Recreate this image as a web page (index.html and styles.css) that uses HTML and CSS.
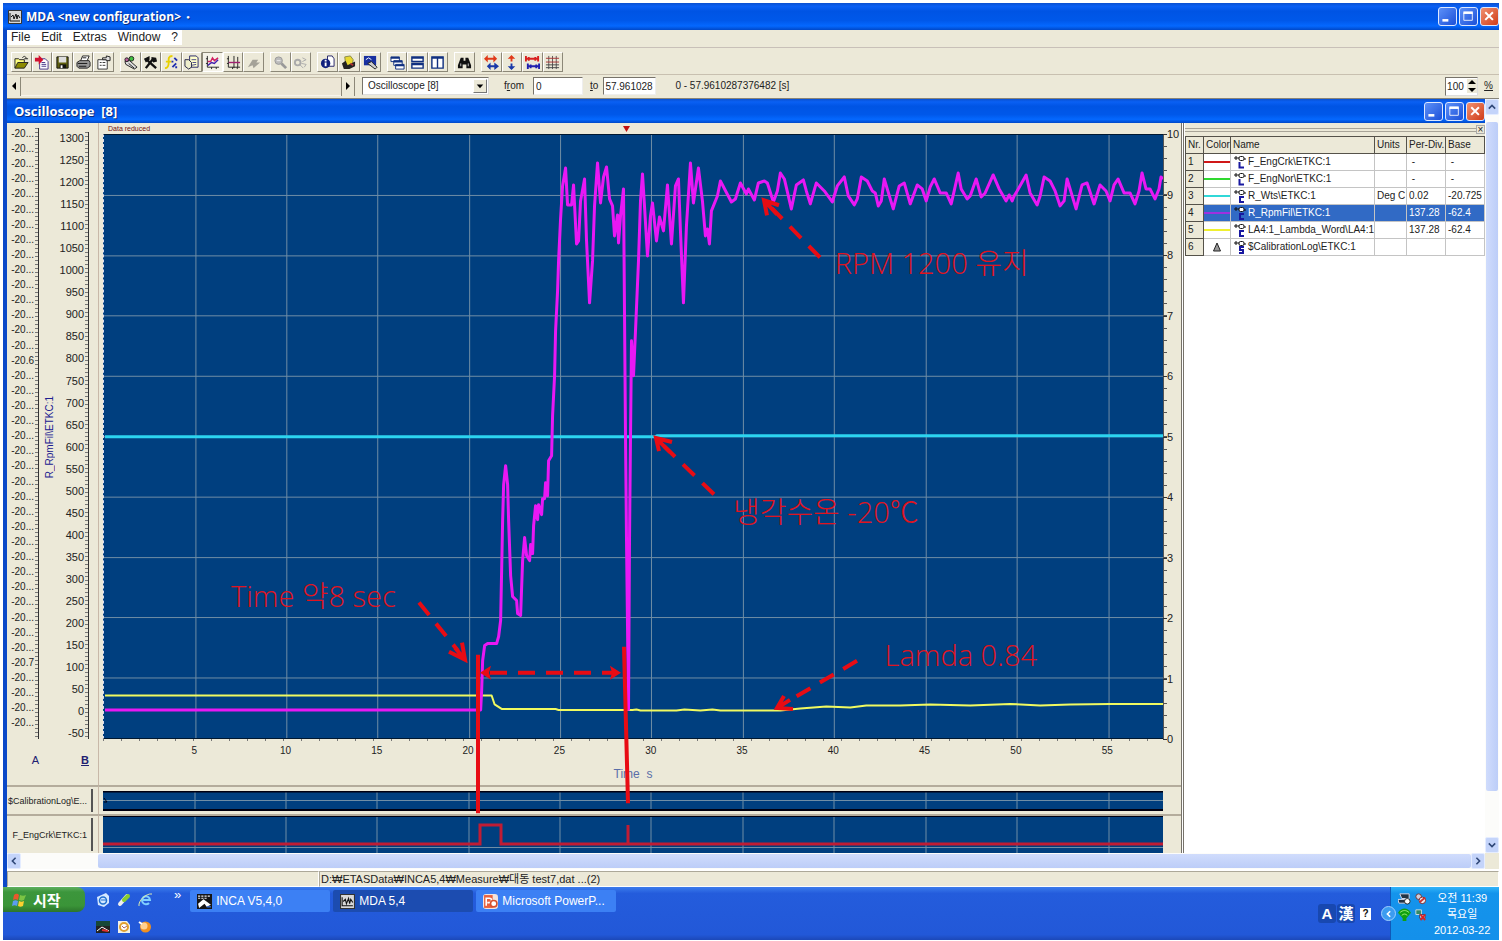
FILE: index.html
```html
<!DOCTYPE html>
<html lang="ko">
<head>
<meta charset="utf-8">
<title>MDA &lt;new configuration&gt;</title>
<link rel="stylesheet" href="styles.css">
</head>
<body>
<svg class="defs" aria-hidden="true">
  <symbol id="wave" viewBox="0 0 14 14"><path fill="#d8d8d8" stroke="#333" d="M.5.5h13v13H.5z"/><path d="M2 3v8h10M3 7l2-2 1 4 2-5 1 5 1-4 2 3" fill="none" stroke="#111"/></symbol>
  <symbol id="min" viewBox="0 0 20 20"><path fill="#fff" d="M4 13h7v3H4z"/></symbol>
  <symbol id="max" viewBox="0 0 20 20"><path fill="none" stroke="#fff" d="M4.500 5.500h10v9h-10z"/><path fill="#fff" d="M4 4h11v3H4z"/></symbol>
  <symbol id="cls" viewBox="0 0 20 20"><path stroke="#fff" stroke-width="2.400" d="M5 5l9 9M14 5l-9 9"/></symbol>
  <symbol id="sig" viewBox="0 0 14 14"><path d="M1 3h4M3 1v4M5 3h1M11 4h2" stroke="#111" fill="none"/><rect x="6" y="1.500" width="5" height="4" rx="1.500" fill="#fff" stroke="#111"/></symbol>
</svg>
<div class="desktop">
<main class="app">
  <header class="titlebar">
    <svg class="i14"><use href="#wave"/></svg>
    <h1>MDA &lt;new configuration&gt; <small>●</small></h1>
    <div class="winbtns">
      <button aria-label="Minimize"><svg><use href="#min"/></svg></button><button aria-label="Maximize"><svg><use href="#max"/></svg></button><button class="close" aria-label="Close"><svg><use href="#cls"/></svg></button>
    </div>
  </header>
  <nav class="menu"><div><button>File</button><button>Edit</button><button>Extras</button><button>Window</button><button>?</button></div></nav>
  <div class="toolbar">
    <div class="grp g5">
      <button aria-label="Open"><svg viewBox="0 0 16 16"><path d="M1 14V4h4l1 1h5v3" fill="#ffff80" stroke="#222"/><path d="M1 14l3-6h11l-4 6z" fill="#8c8a00" stroke="#222"/><path d="M9 3c2-3 4-1 4 1m-2 0h4" stroke="#222" fill="none"/></svg></button>
      <button aria-label="Import"><svg viewBox="0 0 16 16"><path d="M6 4h6l3 3v8H6z" fill="#fff" stroke="#438"/><path d="M8 8h4M8 10h5M8 12h5" stroke="#438"/><path d="M1 3h4V0l5 5-5 5V7H1z" fill="#d01030"/></svg></button>
      <button aria-label="Save"><svg viewBox="0 0 16 16"><path d="M2 2h12v12H2z" fill="#606010" stroke="#111"/><path d="M4 2h8v6H4z" fill="#ddd"/><path d="M5 10h7v4H5z" fill="#111"/><path d="M6 11h2v3H6z" fill="#fff"/></svg></button>
      <button aria-label="Print"><svg viewBox="0 0 16 16"><path d="M5 6l2-5h7l-2 5" fill="#fff" stroke="#222"/><path d="M1 8l3-2h10l1 2v4l-3 2H3l-2-2z" fill="#999" stroke="#222"/><path d="M2 9h10M3 12h8M7 3h4" stroke="#111"/></svg></button>
      <button aria-label="Properties"><svg viewBox="0 0 16 16"><path d="M2 5h10v10H2z" fill="#fff" stroke="#333"/><path d="M4 8h2M7 8h3M4 11h2M7 11h3" stroke="#333"/><path d="M7 3h4V1l4 1v4h-4V5H7z" fill="#ddd" stroke="#222"/></svg></button>
    </div>
    <div class="grp g7">
      <button aria-label="Variables"><svg viewBox="0 0 16 16"><path d="M2 7l5-1 8 7-3 2-9-5z" fill="#ddd" stroke="#222"/><circle cx="4" cy="5" r="2" fill="#c060a0" stroke="#222"/><circle cx="9" cy="4" r="2.500" fill="#40c040" stroke="#222"/><path d="M6 9l6 5" stroke="#222"/></svg></button>
      <button aria-label="Tools"><svg viewBox="0 0 16 16"><path d="M3 14l7-9M5 6l9 8" stroke="#111" stroke-width="2.500"/><path d="M1 4l6-3v4L3 8zM9 2l5 1 1 4-4 1-2-3z" fill="#111"/></svg></button>
      <button aria-label="Calculate"><svg viewBox="0 0 16 16"><path d="M9 1C4 1 5 5 5 8s-1 6-4 6M2 7h6" fill="none" stroke="#e8d000" stroke-width="2"/><path d="M11 3l3 3M9 13l4-4M8 7h2M13 12v2" stroke="#2030b0" stroke-width="2"/></svg></button>
      <button aria-label="Copy"><svg viewBox="0 0 16 16"><path d="M6 1h7l2 2v10H6z" fill="#ffc" stroke="#226"/><path d="M1 5h4l3 3v5l-3 2-4-3z" fill="#eec" stroke="#224"/><path d="M8 5h5M9 8h4M8 11l5-1" stroke="#448"/></svg></button>
      <button class="on" aria-label="Oscilloscope"><svg viewBox="0 0 16 16"><path d="M2.500 1v12H15M1 4h2M1 9h2M7 13v2M12 13v2" stroke="#222" fill="none"/><path d="M3 7h3l2-4 2 3 4-3" stroke="#d02060" stroke-width="1.500" fill="none"/><path d="M3 11l4-3 3 1 4-4" stroke="#4020b0" stroke-width="1.500" fill="none"/></svg></button>
      <button aria-label="Cursor"><svg viewBox="0 0 16 16"><path d="M2.500 1v12H15M1 4h2M1 9h2M8.500 1v13M7 13v2M12 13v2M12.500 2v11" stroke="#222" fill="none"/><path d="M3 8h12" stroke="#a02070" stroke-width="1.500"/></svg></button>
      <button disabled aria-label="Eraser"><svg viewBox="0 0 16 16"><path d="M2 13l5-8h6l-2 3h4l-7 6-1-3z" fill="#a4a298"/></svg></button>
    </div>
    <div class="grp g2">
      <button disabled aria-label="Zoom"><svg viewBox="0 0 16 16"><circle cx="6" cy="6" r="4" fill="#bbb" stroke="#999"/><path d="M9 9l5 5" stroke="#999" stroke-width="3"/><path d="M4 6h4" stroke="#eee"/></svg></button>
      <button disabled aria-label="Unzoom"><svg viewBox="0 0 16 16"><circle cx="5" cy="8" r="3" fill="none" stroke="#aaa" stroke-width="2"/><path d="M7 10l4 4M10 3l4 2-4 2M9 9l5 1-2 3" stroke="#aaa" fill="none"/></svg></button>
    </div>
    <div class="grp g3">
      <button aria-label="Info"><svg viewBox="0 0 16 16"><path d="M8 1h5l2 3v8H8z" fill="#fff" stroke="#226"/><circle cx="6" cy="9" r="5" fill="#10207c"/><path d="M6 8v4M6 5v2" stroke="#fff" stroke-width="2"/></svg></button>
      <button aria-label="Data"><svg viewBox="0 0 16 16"><path d="M4 2l6-1 3 4-1 6H5z" fill="#e8d830" stroke="#884"/><path d="M1 9l4-3 2 5 8-4v5l-6 3H3z" fill="#222"/><path d="M10 9l3 2" stroke="#a33" stroke-width="2"/></svg></button>
      <button aria-label="View"><svg viewBox="0 0 16 16"><path d="M1 1h13v10H1z" fill="#1830a0"/><path d="M3 5l3-2 3 2" stroke="#fff" fill="none"/><path d="M5 9l4-2 6 6-2 2z" fill="#ccc" stroke="#222"/></svg></button>
    </div>
    <div class="grp g3b">
      <button aria-label="Cascade"><svg viewBox="0 0 16 16"><path d="M1 2h9v5H1zM4 6h9v5H4zM6 10h9v5H6z" fill="#fff" stroke="#103080"/><path d="M1 2h9v2H1zM4 6h9v2H4zM6 10h9v2H6z" fill="#103080"/></svg></button>
      <button aria-label="Tile rows"><svg viewBox="0 0 16 16"><path d="M2 2h12v5H2zM2 9h12v5H2z" fill="#fff" stroke="#103080" stroke-width="1.500"/><path d="M2 2h12v2H2zM2 9h12v2H2z" fill="#103080"/></svg></button>
      <button aria-label="Tile columns"><svg viewBox="0 0 16 16"><path d="M2 2h6v12H2zM8 2h6v12H8z" fill="#fff" stroke="#103080" stroke-width="1.500"/><path d="M2 2h12v2H2z" fill="#103080"/></svg></button>
    </div>
    <div class="grp g1"><button aria-label="Find"><svg viewBox="0 0 16 16"><path d="M4 3h3v3h2V3h3l3 8v3h-5v-4H6v4H1v-3z" fill="#111"/><path d="M4 9v3M12 9v3" stroke="#ccc"/></svg></button></div>
    <div class="grp g4">
      <button aria-label="Scale both"><svg viewBox="0 0 16 16"><path d="M0 4l4-4v3h6V0l4 4-4 4V5H4v3z" fill="#e03818"/><path d="M3 12l4-4v3h4V8l5 4-5 4v-3H7v3z" fill="#1838a8"/></svg></button>
      <button aria-label="Scale Y"><svg viewBox="0 0 16 16"><path d="M8 0l4 4H9v3H7V4H4z" fill="#e03818"/><path d="M8 16l4-4H9V9H7v3H4z" fill="#1838a8"/></svg></button>
      <button aria-label="Fit X"><svg viewBox="0 0 16 16"><path d="M1 1v6M14 1v6M2 4h11M4 2v4M11 2v4" stroke="#d82020" stroke-width="2"/><path d="M3 9v6M15 9v6M4 12h10M6 10v4M12 10v4" stroke="#2020b0" stroke-width="2"/></svg></button>
      <button aria-label="Grid"><svg viewBox="0 0 16 16"><path d="M4 1v14M8 1v14M12 1v14" stroke="#555"/><path d="M1 3.500h14M1 7.500h14" stroke="#a33"/><path d="M1 10.500h14M1 13.500h14" stroke="#444"/></svg></button>
    </div>
  </div>
  <form class="navrow">
    <button type="button" class="arrow" aria-label="Back"><svg viewBox="0 0 8 8"><path d="M6 0v8L2 4z"/></svg></button>
    <div class="track"></div>
    <button type="button" class="arrow fwd" aria-label="Forward"><svg viewBox="0 0 8 8"><path d="M2 0v8l4-4z"/></svg></button>
    <div class="combo"><select aria-label="Window"><option>Oscilloscope [8]</option></select><svg viewBox="0 0 13 13"><path d="M3 5h7l-3.500 4z"/></svg></div>
    <label for="from">f<u>r</u>om</label><input id="from" value="0">
    <label for="to"><u>t</u>o</label><input id="to" value="57.961028">
    <output>0 - 57.9610287376482 [s]</output>
    <div class="spin"><input id="pct" value="100"><svg viewBox="0 0 10 14"><path d="M1 5h8L5 1zM1 9h8l-4 4z"/></svg></div><label for="pct"><u>%</u></label>
  </form>

  <div class="mdi">
    <section class="child">
      <header class="titlebar sub">
        <h2>Oscilloscope&nbsp; [8]</h2>
        <div class="winbtns">
          <button aria-label="Minimize"><svg><use href="#min"/></svg></button><button aria-label="Maximize"><svg><use href="#max"/></svg></button><button class="close" aria-label="Close"><svg><use href="#cls"/></svg></button>
        </div>
      </header>
      <div class="panes">
        <div class="scope">
          <div class="axes">
            <div class="axis a"><div class="vals">
              <span>-20...</span><span>-20...</span><span>-20...</span><span>-20...</span><span>-20...</span><span>-20...</span><span>-20...</span><span>-20...</span><span>-20...</span><span>-20...</span><span>-20...</span><span>-20...</span><span>-20...</span><span>-20...</span><span>-20...</span><span>-20.6</span><span>-20...</span><span>-20...</span><span>-20...</span><span>-20...</span><span>-20...</span><span>-20...</span><span>-20...</span><span>-20...</span><span>-20...</span><span>-20...</span><span>-20...</span><span>-20...</span><span>-20...</span><span>-20...</span><span>-20...</span><span>-20...</span><span>-20...</span><span>-20...</span><span>-20...</span><span>-20.7</span><span>-20...</span><span>-20...</span><span>-20...</span><span>-20...</span>
            </div><b>A</b></div>
            <div class="vname"><span>R_RpmFil\ETKC:1</span></div>
            <div class="axis b"><div class="vals">
              <span>1300</span><span>1250</span><span>1200</span><span>1150</span><span>1100</span><span>1050</span><span>1000</span><span>950</span><span>900</span><span>850</span><span>800</span><span>750</span><span>700</span><span>650</span><span>600</span><span>550</span><span>500</span><span>450</span><span>400</span><span>350</span><span>300</span><span>250</span><span>200</span><span>150</span><span>100</span><span>50</span><span>0</span><span>-50</span>
            </div><b><u>B</u></b></div>
          </div>
          <div class="main">
            <div class="strip"><small>Data reduced</small></div>
            <svg class="plot" viewBox="103 134 1060 604" preserveAspectRatio="none">
              <path class="grid" d="M195 134v604M286 134v604M377 134v604M469 134v604M560 134v604M651 134v604M743 134v604M834 134v604M926 134v604M1017 134v604M1109 134v604M103 194.500h1060M103 255h1060M103 315h1060M103 375.500h1060M103 436h1060M103 496.500h1060M103 557h1060M103 617h1060M103 677.500h1060"/>
              <path class="cy" d="M104 436H655L657 435H1163"/>
              <path class="ye" d="M104 695H491L494 704L501 708.500H555L558 709.500H632L636 709L640 710H676L684 709L700 710L712 709L720 710H780L800 708L826 706L850 707L866 705H900L930 704L970 705L1010 703.500L1040 705L1070 704L1110 703.500H1163"/>
              <path class="pu" d="M104 709.500H480L481 690L482 660L484 645L487 643H496L498 636L500 620L502 520L503 484L505 465L507 484L508 520L510 575L512 596L516 600L517 613L520 615L522 560L524 537L526 555L529 560L530 544L532 553L533 525L535 505L537 519L538 504L541 514L542 498L544 498L545 482L547 495L548 460L551 455L552 415L554 375L555 330L557 290L558 260L560 218L562 185L565 167L567 204L571 204L573 184L576 243L578 240L580 200L584 178L586 240L589 302L592 260L594 205L597 162L600 202L603 176L606 166L609 198L612 205L614 235L617 214L618 242L620 215L623 188L625 436L626 540L628 709L629 540L630 436L631 340L633 375L635 330L638 260L640 200L642 173L644 205L647 255L650 215L652 202L656 240L659 216L663 230L667 184L671 243L675 185L678 178L680 230L683 302L686 225L690 162L693 202L698 167L702 200L705 235L707 228L709 243L711 210L717 195L720 180L731 201L735 198L740 182L746 193L748 188L754 199L758 182L764 180L767 182L773 201L777 190L780 172L784 178L791 208L796 184L803 179L806 190L810 203L816 182L824 190L832 201L837 185L844 176L848 195L854 204L857 198L861 176L867 180L872 190L875 192L878 205L881 200L884 178L893 208L899 185L904 182L910 203L917 184L922 188L926 200L930 186L934 178L940 192L946 192L951 203L954 190L958 172L961 188L967 198L970 195L976 178L981 196L985 192L993 174L999 188L1006 200L1009 194L1012 200L1014 195L1017 190L1026 174L1030 192L1037 204L1040 195L1044 176L1050 180L1055 190L1060 205L1064 200L1067 178L1076 208L1082 184L1087 182L1094 203L1100 184L1106 190L1110 200L1114 184L1118 178L1124 192L1130 192L1135 203L1139 190L1142 172L1146 188L1150 188L1155 198L1159 188L1161 176L1163 178"/>
            </svg>
            <div class="yr"><span>10</span><span>9</span><span>8</span><span>7</span><span>6</span><span>5</span><span>4</span><span>3</span><span>2</span><span>1</span><span>0</span></div>
            <div class="xs"><span>5</span><span>10</span><span>15</span><span>20</span><span>25</span><span>30</span><span>35</span><span>40</span><span>45</span><span>50</span><span>55</span></div>
            <div class="xname">Time&nbsp; s</div>
          </div>
          <div class="lab cal"><span>$CalibrationLog\E...</span></div>
          <div class="bar cal"><svg viewBox="103 789 1060 20" preserveAspectRatio="none"><path class="grid" d="M195 789v20M286 789v20M377 789v20M469 789v20M560 789v20M651 789v20M743 789v20M834 789v20M926 789v20M1017 789v20M1109 789v20M103 798.500h1060"/><path d="M103 789.500h1060M103 808h1060" stroke="#001" stroke-width="2" fill="none"/><path d="M104 796l3 4h-3" stroke="#001" fill="none"/></svg></div>
          <div class="lab eng"><span>F_EngCrk\ETKC:1</span></div>
          <div class="bar eng"><svg viewBox="103 814 1060 37" preserveAspectRatio="none"><path class="grid" d="M195 814v37M286 814v37M377 814v37M469 814v37M560 814v37M651 814v37M743 814v37M834 814v37M926 814v37M1017 814v37M1109 814v37M103 845.500h1060"/><path d="M103 814.500h1060" stroke="#001"/><path d="M103 842H480V823H501V842H628V823V842H1163" stroke="#c01c34" stroke-width="3" fill="none"/></svg></div>
          <div class="notes">
            <svg viewBox="99 123 1082 728" preserveAspectRatio="none">
              <path d="M623 126h7l-3.500 6z" fill="#c01010"/>
              <g fill="none" stroke="#e80c14" stroke-width="4">
                <path d="M478 653V811M624 645L628 801"/>
                <path d="M490 671H612" stroke-dasharray="17 11"/>
                <path d="M419 601L458 649M820 257L772 208M714 493L664 445M857 659L787 700" stroke-dasharray="16 11"/>
              </g>
              <g fill="#e80c14">
                <path d="M480 671l11-7-2 7 2 7zM621 671l-11-7 2 7-2 7z"/>
              </g>
              <g fill="none" stroke="#e80c14" stroke-width="4">
                <path d="M449 650L465 658L462 641M465 658L455 646"/>
                <path d="M767 215L764 200L779 205M764 200L777 214"/>
                <path d="M659 450L656 437L672 441M656 437L670 451"/>
                <path d="M784 694L777 706L793 707M777 706L790 698"/>
              </g>
            </svg>
            <p class="n1">RPM 1200 유지</p><p class="n2">냉각수온 -20℃</p><p class="n3">Time 약8 sec</p><p class="n4">Lamda 0.84</p>
          </div>
        </div>
        <aside class="legend">
          <div class="grip"><i></i><button aria-label="Close list">×</button></div>
          <table>
            <colgroup><col class="c1"><col class="c2"><col><col class="c4"><col class="c5"><col class="c6"></colgroup>
            <thead><tr><th>Nr.</th><th>Color</th><th>Name</th><th>Units</th><th>Per-Div.</th><th>Base</th></tr></thead>
            <tbody>
              <tr><th>1</th><td><i class="red"></i></td><td><svg class="i14"><use href="#sig"/><path class="k" d="M6.500 7v5.500H11"/></svg>F_EngCrk\ETKC:1</td><td></td><td>&nbsp;-</td><td>&nbsp;-</td></tr>
              <tr><th>2</th><td><i class="green"></i></td><td><svg class="i14"><use href="#sig"/><path class="k" d="M6.500 7v5.500H11"/></svg>F_EngNor\ETKC:1</td><td></td><td>&nbsp;-</td><td>&nbsp;-</td></tr>
              <tr><th>3</th><td><i class="cyan"></i></td><td><svg class="i14"><use href="#sig"/><path class="k" d="M11 8H7v5h4"/></svg>R_Wts\ETKC:1</td><td>Deg C</td><td>0.02</td><td>-20.725</td></tr>
              <tr class="sel"><th>4</th><td><i class="violet"></i></td><td><svg class="i14"><use href="#sig"/><path class="k" d="M11 8H7v5h4"/></svg>R_RpmFil\ETKC:1</td><td></td><td>137.28</td><td>-62.4</td></tr>
              <tr><th>5</th><td><i class="yellow"></i></td><td><svg class="i14"><use href="#sig"/><path class="k" d="M11 8H7v5h4"/></svg>LA4:1_Lambda_Word\LA4:1</td><td></td><td>137.28</td><td>-62.4</td></tr>
              <tr><th>6</th><td class="tri"><svg viewBox="0 0 10 10"><path d="M5 1l3.500 8h-7z" fill="#999" stroke="#222"/></svg></td><td><svg class="i14"><use href="#sig"/><path class="k" d="M11 7H7v3h3v3H6"/></svg>$CalibrationLog\ETKC:1</td><td></td><td></td><td></td></tr>
            </tbody>
          </table>
        </aside>
      </div>
      <div class="hs"><button aria-label="Left"><svg viewBox="0 0 10 10"><path d="M7 1L3 5l4 4"/></svg></button><div class="ht"><i></i></div><button aria-label="Right"><svg viewBox="0 0 10 10"><path d="M3 1l4 4-4 4"/></svg></button></div>
    </section>
    <div class="vs"><button aria-label="Up"><svg viewBox="0 0 10 10"><path d="M1 7l4-4 4 4"/></svg></button><div class="vt"><i></i></div><button aria-label="Down"><svg viewBox="0 0 10 10"><path d="M1 3l4 4 4-4"/></svg></button></div>
  </div>
  <footer class="status"><span></span><span>D:₩ETASData₩INCA5,4₩Measure₩대동 test7,dat ...(2)</span></footer>
</main>
<div class="taskbar">
  <button class="start"><svg viewBox="0 0 18 18"><path d="M3 4c2-2 4-1 5 0L7 9C5 8 4 8 2 9z" fill="#e8582c"/><path d="M9 4c2 1 4 1 6 0l-2 5c-2 1-3 1-5 0z" fill="#7cc444"/><path d="M2 10c2-1 3-1 5 0l-1 5c-2-1-3-1-5 0z" fill="#5c9cf0"/><path d="M8 10c2 1 3 1 5 0l-1 5c-2 1-3 1-5 0z" fill="#fcd030"/></svg>시작</button>
  <div class="quick">
    <a href="#" aria-label="Outlook"><svg viewBox="0 0 14 14"><path d="M1 4l9-4 3 3v7l-5 4-6-2z" fill="#d4e8ff"/><circle cx="7" cy="7.500" r="3.500" fill="none" stroke="#2070d0" stroke-width="1.500"/><path d="M5 7h5" stroke="#2070d0"/></svg></a>
    <a href="#" aria-label="Notes"><svg viewBox="0 0 14 14"><path d="M3 11l7-8" stroke="#eee" stroke-width="4" stroke-linecap="round"/><path d="M7 7l4-4" stroke="#88cc30" stroke-width="4" stroke-linecap="round"/></svg></a>
    <a href="#" aria-label="Internet Explorer"><svg viewBox="0 0 14 14"><path d="M11 10a4 4 0 1 1 1-3H5" fill="none" stroke="#80d0ff" stroke-width="2"/><path d="M1 13C0 8 8 0 14 1" fill="none" stroke="#d8e8b0"/></svg></a>
    <a href="#" aria-label="INCA"><svg viewBox="0 0 14 14"><path d="M0 1h14v5H0z" fill="#184838"/><path d="M0 6h14v7H0z" fill="#222"/><path d="M1 11l5-4 7 4" stroke="#fff" fill="none"/><path d="M6 10l6 1" stroke="#e03030" stroke-width="2"/></svg></a>
    <a href="#" aria-label="Mail"><svg viewBox="0 0 14 14"><path d="M1 1h9l3 4v8H1z" fill="#f0f0e8"/><circle cx="7" cy="7" r="4" fill="#fff" stroke="#e0a030" stroke-width="2"/><path d="M5 6l2 2 3-2" stroke="#a66" fill="none"/></svg></a>
    <a href="#" aria-label="Player"><svg viewBox="0 0 14 14"><circle cx="7.500" cy="7" r="5.500" fill="#f09020"/><circle cx="6" cy="6" r="3.500" fill="#ffd090"/><path d="M1 2l3 2" stroke="#fff" stroke-width="2"/></svg></a>
  </div>
  <span class="more">»</span>
  <div class="tasks">
    <button><svg viewBox="0 0 14 14"><path fill="#151515" d="M0 0h14v14H0z"/><path d="M1 2h12M1 4h8" stroke="#eee" stroke-dasharray="2 1"/><path d="M1 9l5-4 7 5-4 2-2-3-5 4z" fill="#fff"/><path d="M9 12h4" stroke="#48f"/></svg>INCA V5,4,0</button>
    <button class="act"><svg class="i14"><use href="#wave"/></svg>MDA 5,4</button>
    <button><svg viewBox="0 0 14 14"><rect width="14" height="14" rx="3" fill="#f4e4dc"/><path d="M1 1h8v12H1z" fill="#e8603c"/><path d="M3 11V4h3a2 2 0 0 1 0 4H4" fill="none" stroke="#fff" stroke-width="1.500"/><circle cx="10" cy="9" r="3" fill="#fff" stroke="#d8502c" stroke-width="1.500"/></svg>Microsoft PowerP...</button>
  </div>
  <div class="ime"><button>A</button><button>漢</button><button class="q">?</button></div>
  <div class="tray">
    <button class="chev" aria-label="Hide icons"><svg viewBox="0 0 10 10"><path d="M6.500 1.500L3 5l3.500 3.500"/></svg></button>
    <div class="ticons">
      <svg viewBox="0 0 14 14"><path d="M2 2h10v5H4zM0 8h9v4H1z" fill="#234" stroke="#dde"/><circle cx="10" cy="10" r="3" fill="#fff" stroke="#222"/></svg>
      <svg viewBox="0 0 14 14"><circle cx="5" cy="5" r="3" fill="#ccd" stroke="#633"/><circle cx="9" cy="9" r="3.500" fill="#eee" stroke="#822"/><path d="M6 11l6-5" stroke="#c33" stroke-width="2"/></svg>
      <svg viewBox="0 0 14 14"><path d="M0 5c4-6 10-6 14 0l-5 6v3H5v-3z" fill="#10a010"/><path d="M2 5c3-3 7-3 10 0M4 8c2-2 4-2 6 0" stroke="#a0f080" fill="none"/></svg>
      <svg viewBox="0 0 14 14"><path d="M2 2h6v5H2z" fill="#386" stroke="#cdd"/><path d="M6 7h6v4H6z" fill="#ccd" stroke="#446"/><path d="M7 7l5 6M12 7l-5 6" stroke="#e02020" stroke-width="2"/></svg>
    </div>
    <time>오전 11:39<br>목요일<br>2012-03-22</time>
  </div>
</div>
</div>
</body>
</html>
```
FILE: styles.css
```css
* { box-sizing: border-box; }
body { margin: 0; background: #fff; font: 11px/12px "Liberation Sans", "Noto Sans CJK KR", sans-serif; color: #222; }
button, input, select { font: inherit; color: inherit; padding: 0; margin: 0; border: 0; border-radius: 0; background: none; }
h1, h2, p { margin: 0; font-weight: normal; }
svg { display: block; }
.defs { position: absolute; width: 0; height: 0; }
.i14 { width: 14px; height: 14px; flex: none; }
.desktop { min-height: 100vh; padding: 3px; display: flex; flex-direction: column; }
.app { flex: 1; display: flex; flex-direction: column; background: #ece9d8; border-left: 4px solid #0a48c8; min-height: 0; }

.titlebar { height: 27px; display: flex; align-items: center; gap: 4px; margin-left: -4px; padding: 0 0 0 5px; background: linear-gradient(#0a50d0, #0a60f4 12%, #0054e4 30%, #0058ea 65%, #0468ff 85%, #0048c8); color: #fff; }
.titlebar h1, .titlebar h2 { flex: 1; font: bold 12px/16px "Open Sans", sans-serif; text-shadow: 1px 1px #0a2c80; }
.titlebar h2 { font-size: 13px; }
.titlebar small { font-size: 6px; vertical-align: 2px; margin-left: 2px; }
.titlebar.sub { height: 24px; margin: 0; padding: 0 0 0 7px; }
.winbtns { display: flex; gap: 2px; }
.winbtns button { width: 19px; height: 19px; border: 1px solid #dde8ff; border-radius: 3px; background: linear-gradient(135deg, #5c90f8, #1c50d8); }
.winbtns .close { background: linear-gradient(135deg, #f09070, #d03c18); }
.winbtns svg { width: 17px; height: 17px; }

.menu { height: 18px; border-bottom: 1px solid #c8c0b8; font: 12px/15px "Liberation Sans", sans-serif; }
.menu div { width: 175px; height: 15px; padding: 0 4px; display: flex; justify-content: space-between; background: #fff; }
.toolbar { height: 27px; padding: 4px 4px 2px; display: flex; gap: 6px; border-bottom: 1px solid #c8c0b0; }
.grp { display: grid; grid-auto-flow: column; grid-auto-columns: 1fr; }
.g5 { width: 103px; }
.g7 { width: 144px; }
.g2 { width: 41px; }
.g3 { width: 64px; }
.g3b { width: 61px; }
.g1 { width: 21px; }
.g4 { width: 82px; }
.grp button { display: grid; place-items: center; border: 1px solid; border-color: #fff #8c8878 #8c8878 #fff; }
.grp button.on { border-color: #8c8878 #fff #fff #8c8878; background: #f4f2e8; }
.grp svg { width: 15px; height: 15px; }

.navrow { height: 24px; padding: 2px 6px 3px 0; display: flex; align-items: center; border-bottom: 1px solid #888478; }
.arrow { width: 14px; height: 19px; border-right: 1px solid #8c8878; }
.arrow svg { width: 8px; height: 8px; margin: 0 auto; }
.track { width: 320px; height: 19px; background: #ece6d6; border-top: 1px solid #c4bca8; border-bottom: 1px solid #f8f4ec; }
.fwd { border-left: 1px solid #8c8878; }
.combo { width: 127px; height: 18px; margin: 0 15px 0 7px; display: flex; align-items: center; background: #fff; border: 1px solid; border-color: #77736a #ddd #ddd #77736a; }
.combo select { flex: 1; min-width: 0; appearance: none; padding-left: 5px; font-size: 10px; }
.combo svg { width: 14px; height: 14px; margin-right: 1px; background: #ece9d8; border: 1px solid; border-color: #fff #777 #777 #fff; }
.navrow label { margin-right: 9px; font-size: 10px; }
.navrow label:last-child { margin: 0 0 0 6px; }
.navrow input { width: 50px; height: 18px; margin-right: 7px; padding: 0 2px; background: #fff; border: 1px solid; border-color: #77736a #eee #eee #77736a; font-size: 10px; }
.navrow #to { width: 53px; margin-right: 19px; padding: 0 1px; }
.navrow label[for="to"] { margin-right: 5px; }
.navrow output { flex: 1; font-size: 10px; }
.spin { display: flex; align-items: center; background: #fff; border: 1px solid; border-color: #77736a #ddd #ddd #77736a; }
.spin #pct { width: 21px; height: 17px; margin: 0; padding: 0 0 0 1px; border: 0; }
.spin svg { width: 10px; height: 14px; background: #ece9d8; }

.mdi { flex: 1; display: flex; min-height: 0; }
.child { flex: 1; min-width: 0; display: flex; flex-direction: column; }
.panes { flex: 1; display: flex; min-height: 0; }
.scope { flex: 1; min-width: 0; position: relative; display: grid; grid-template-columns: 92px 1fr; grid-template-rows: 1fr 29px 39px; }
.axes { display: flex; padding-top: 11px; border-right: 1px solid #c8b8a8; }
.axis { display: flex; flex-direction: column; padding-bottom: 19px; }
.axis b { padding-top: 15px; font-weight: normal; text-align: right; color: #202070; }
.axis.b b { font-weight: bold; }
.vals { flex: 1; display: flex; flex-direction: column; justify-content: space-between; text-align: right; position: relative; padding-right: 5px; font-size: 11px; line-height: 12px; }
.vals::after { content: ""; position: absolute; right: 0; top: 0; bottom: 0; width: 3px; border-right: 1px solid #333; background: repeating-linear-gradient(#777 0 1px, transparent 1px 4px); }
.vals span { white-space: nowrap; margin-left: -4px; }
.a { width: 32px; }
.a .vals { font-size: 10px; margin-top: -6px; padding-bottom: 10px; }
.vname { width: 22px; padding-bottom: 45px; display: grid; place-items: center; color: #202090; font-size: 10px; }
.vname span { writing-mode: vertical-rl; transform: rotate(180deg); }
.b { width: 28px; }
.b .vals { margin-top: -2px; }
.main { min-width: 0; display: grid; grid-template-columns: 1fr 18px; grid-template-rows: 11px 1fr 26px 20px; padding-left: 4px; }
.strip { grid-column: 1 / 3; padding-left: 5px; color: #701010; line-height: 11px; }
.strip small { font-size: 7px; display: block; }
.plot { width: 100%; height: 100%; min-height: 0; background: #003f7f; border-left: 1px dashed #dde; border-top: 1px solid #001830; border-bottom: 1px solid #001830; }
.grid { stroke: #6f8ea6; fill: none; }
.pu, .cy, .ye { fill: none; stroke-linejoin: round; stroke-width: 3; }
.pu { stroke: #e818f4; }
.cy { stroke: #2cd4f0; }
.ye { stroke: #f0fa60; stroke-width: 2; }
.yr { margin: -6px 0; display: flex; flex-direction: column; justify-content: space-between; position: relative; padding-left: 4px; }
.yr::before { content: ""; position: absolute; left: 0; top: 6px; bottom: 6px; width: 3px; border-left: 1px solid #555; background: repeating-linear-gradient(#555 0 1px, transparent 1px 2%); }
.yr span::before { content: ""; position: absolute; left: 0; width: 4px; height: 1px; margin-top: 6px; background: #333; }
.xs { display: flex; padding: 5px 0 0 4.300%; background: repeating-linear-gradient(90deg, #777 0 1px, transparent 1px 18px) top / 100% 2px no-repeat; font-size: 10px; grid-column: 1; }
.xs span { flex: none; width: 9%; text-align: center; line-height: 14px; }
.xname { grid-column: 1; text-align: center; color: #5a6ea8; font-size: 12px; line-height: 18px; }
.lab, .bar { border-top: 2px solid #b4ac9c; }
.lab { display: flex; align-items: center; justify-content: flex-end; padding: 2px 5px 2px 0; border-right: 1px solid #c8b8a8; font-size: 9px; white-space: nowrap; }
.lab span { align-self: stretch; display: flex; align-items: center; padding-right: 4px; border-right: 2px solid #555; }
.bar { padding: 0 18px 0 4px; }
.bar.cal { padding-top: 4px; padding-bottom: 3px; }
.bar svg { width: 100%; height: 100%; background: #003f7f; }
.notes { position: absolute; left: 92px; right: 0; top: 0; bottom: 0; pointer-events: none; }
.notes svg { width: 100%; height: 100%; }
.notes p { position: absolute; color: #e01420; font: 300 29px/32px "Open Sans", "Noto Sans CJK KR", sans-serif; white-space: nowrap; }
.n1 { left: 68%; top: 17%; }
.n2 { left: 58.600%; top: 51%; }
.n3 { left: 12.200%; top: 62.500%; }
.n4 { left: 72.600%; top: 70.700%; }

.legend { width: 304px; flex: none; padding-left: 1px; background: #fff; border-left: 3px double #77736a; }
.grip { height: 13px; display: flex; align-items: center; background: #ece9d8; }
.grip i { flex: 1; height: 4px; border: solid #a8a498; border-width: 1px 0; }
.grip button { width: 9px; height: 9px; border: 1px solid #aaa; line-height: 7px; font-size: 10px; }
table { width: 100%; table-layout: fixed; border-collapse: collapse; font-size: 10px; line-height: 12px; }
.c1 { width: 18px; }
.c2 { width: 27px; }
.c4 { width: 32px; }
.c5, .c6 { width: 39px; }
th, td { height: 17px; padding: 0 0 0 2px; text-align: left; font-weight: normal; border: 1px solid #c4c4c4; white-space: nowrap; overflow: hidden; }
th { background: #ece9d8; border-color: #55524a; }
td .i14 { display: inline-block; vertical-align: -4px; margin: 0 1px 0 0; }
td:nth-child(2) { padding: 0; }
td i { display: block; height: 2px; }
.k { fill: none; stroke: #1818a0; stroke-width: 2; }
.red { background: #d01818; }
.green { background: #30d830; }
.cyan { background: #30d8d8; }
.violet { background: #a030e0; }
.yellow { background: #f0f030; }
.sel td { background: #316ac5; color: #fff; }
.tri svg { width: 10px; height: 10px; margin: auto; }

.hs { height: 16px; display: flex; background: #fcfcfa; }
.hs button, .vs button { width: 14px; height: 16px; flex: none; background: #c4d4fa; border: 1px solid #e4ecff; border-radius: 2px; }
.hs button svg, .vs button svg { width: 8px; height: 8px; margin: auto; fill: none; stroke: #304878; stroke-width: 2; }
.ht { flex: 1; padding: 1px 0 1px 77px; }
.ht i { display: block; height: 100%; background: linear-gradient(#d0dcfc, #bccdf8); border-radius: 2px; }
.vs { width: 14px; display: flex; flex-direction: column; background: #fcfcfa; border-bottom: 16px solid #ece9d8; }
.vt { flex: 1; padding: 7px 1px 46px 1px; }
.vt i { display: block; height: 100%; background: linear-gradient(90deg, #d0dcfc, #bccdf8); border-radius: 2px; }
.status { height: 18px; display: flex; border-top: 2px solid #fff; }
.status span { border: 1px solid; border-color: #aca899 #fff #fff #aca899; width: 312px; font: 11px/14px "Liberation Sans", "Noto Sans CJK KR", sans-serif; }
.status span + span { flex: 1; padding-left: 1px; }

.taskbar { height: 53px; display: flex; background: linear-gradient(#3c7cec, #245cdc 12%, #2258d8 90%, #1c48b8); color: #fff; font: 12px/16px "Liberation Sans", "Noto Sans CJK KR", sans-serif; }
.start { width: 82px; height: 25px; display: flex; align-items: center; gap: 4px; padding-left: 8px; background: linear-gradient(#60b060, #3c963c 20%, #3a9438 75%, #2c742c); border-radius: 0 8px 8px 0; font: bold 15px/20px "Noto Sans CJK KR", sans-serif; }
.start svg { width: 18px; height: 18px; }
.quick { width: 63px; margin-left: 7px; padding-top: 6px; display: grid; grid-template-columns: repeat(3, 21px); grid-auto-rows: 27px; }
.quick a { justify-self: center; }
.quick svg { width: 14px; height: 14px; }
.more { margin: 0 9px 0 19px; font-size: 13px; }
.tasks { flex: 1; display: flex; gap: 3px; padding-top: 3px; }
.tasks button { width: 140px; height: 22px; display: flex; align-items: center; gap: 4px; padding-left: 7px; background: #3c80f4; border-radius: 2px; }
.tasks .act { background: #1c4cb0; }
.tasks svg { width: 15px; height: 15px; flex: none; }
.ime { display: flex; align-items: center; gap: 1px; margin-right: 19px; }
.ime button { width: 18px; height: 19px; background: #1848b0; border-radius: 3px; font: bold 15px/18px "Liberation Sans", "Noto Sans CJK KR", sans-serif; }
.ime .q { width: 11px; height: 12px; margin-left: 4px; background: #fff; color: #111; font-size: 10px; line-height: 11px; border-radius: 0; }
.tray { width: 109px; display: flex; align-items: center; background: linear-gradient(#30b4f8, #1494ec 12%, #1490ea); border-left: 1px solid #1058b8; }
.chev { width: 15px; height: 15px; margin-left: -10px; border-radius: 8px; background: #3c9cf0; border: 1px solid #a0d0ff; }
.chev svg { width: 8px; height: 8px; margin: auto; fill: none; stroke: #fff; stroke-width: 2; }
.ticons { display: grid; grid-template-columns: 14px 14px; gap: 3px 2px; margin: 0 6px 14px 2px; }
.ticons svg { width: 13px; height: 13px; }
.tray time { text-align: center; font-size: 11px; line-height: 16px; white-space: nowrap; }
```
